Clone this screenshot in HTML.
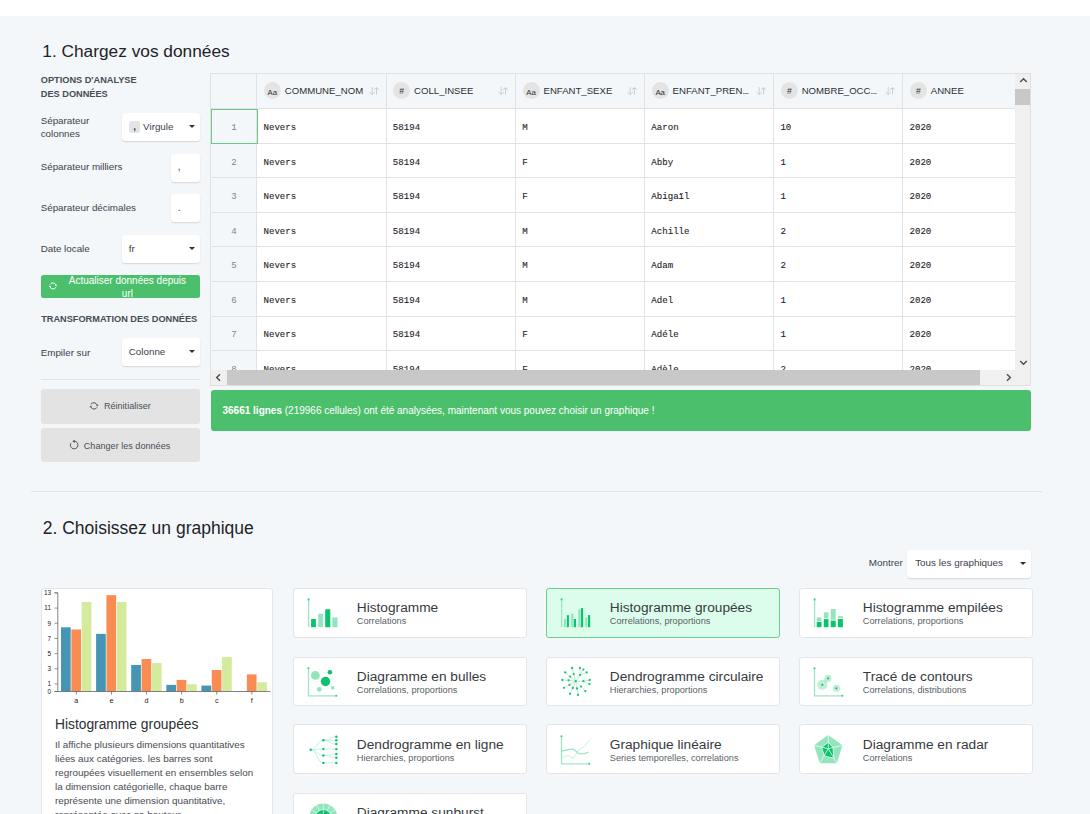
<!DOCTYPE html><html><head><meta charset="utf-8"><style>
*{box-sizing:border-box;margin:0;padding:0}
html,body{width:1090px;height:814px;overflow:hidden}
body{background:#f3f7fa;font-family:"Liberation Sans",sans-serif;color:#2b2f36;position:relative}
.abs{position:absolute}
.t{position:absolute;white-space:nowrap;line-height:1}
.topbar{left:0;top:0;width:1090px;height:16px;background:#fff}
.lbl{font-size:9.8px;color:#3d424a}
.cap{font-weight:bold;font-size:9.2px;color:#474c54}
.box{position:absolute;background:#fff;border-radius:3px;box-shadow:0 1px 1.5px rgba(0,0,0,.13)}
.caret{position:absolute;width:0;height:0;border-left:3px solid transparent;border-right:3px solid transparent;border-top:3.5px solid #2b2f36}
.btng{position:absolute;background:#e3e3e3;border-radius:3px}
.mono{font-family:"Liberation Mono",monospace;font-size:9.1px;color:#1e2127;-webkit-text-stroke:0.1px #1e2127}.num{-webkit-text-stroke:0;color:#80858c}
.hd{font-size:9.6px;color:#2b2f36}
.circ{position:absolute;width:17px;height:17px;border-radius:50%;background:#e4e4e4}
.card{position:absolute;background:#fff;border:1px solid #e3e5e8;border-radius:3px}
.ctitle{font-size:13.7px;color:#363a40}
.csub{font-size:9.2px;color:#5a5f66}
</style></head><body>
<div class="abs topbar"></div>
<div class="t" style="left:42.3px;top:43.0px;font-size:17.3px;color:#1f2329">1. Chargez vos données</div>
<div class="t cap" style="left:40.8px;top:76px">OPTIONS D'ANALYSE</div>
<div class="t cap" style="left:40.8px;top:90.2px">DES DONNÉES</div>
<div class="t lbl" style="left:40.7px;top:116.13px;font-size:9.8px">Séparateur</div>
<div class="t lbl" style="left:40.7px;top:129.33px;font-size:9.8px">colonnes</div>
<div class="t lbl" style="left:40.7px;top:162.33px;font-size:9.8px">Séparateur milliers</div>
<div class="t lbl" style="left:40.7px;top:203.13px;font-size:9.8px">Séparateur décimales</div>
<div class="t lbl" style="left:40.7px;top:243.63px;font-size:9.8px">Date locale</div>
<div class="t lbl" style="left:40.7px;top:348.13px;font-size:9.8px">Empiler sur</div>
<div class="box" style="left:122px;top:113px;width:78px;height:28px"></div>
<div class="abs" style="left:129.1px;top:120.9px;width:10.6px;height:11.8px;background:#e2e5e8;border-radius:2.5px"></div>
<div class="t" style="left:133.2px;top:122.2px;font-size:10px;font-weight:bold;color:#444">,</div>
<div class="t lbl" style="left:143.1px;top:121.73px;font-size:9.8px">Virgule</div>
<div class="caret" style="left:188.5px;top:125.2px"></div>
<div class="box" style="left:171px;top:154px;width:29px;height:27.5px"></div>
<div class="t" style="left:177.8px;top:162px;font-size:10px;color:#333">,</div>
<div class="box" style="left:171px;top:194px;width:29px;height:28px"></div>
<div class="t" style="left:177.8px;top:202.5px;font-size:10px;color:#333">.</div>
<div class="box" style="left:122px;top:235px;width:78px;height:28px"></div>
<div class="t lbl" style="left:128.7px;top:243.73px;font-size:9.8px">fr</div>
<div class="caret" style="left:188.5px;top:247.2px"></div>
<div class="box" style="left:122px;top:338px;width:78px;height:28px"></div>
<div class="t lbl" style="left:128.8px;top:346.73px;font-size:9.8px">Colonne</div>
<div class="caret" style="left:188.5px;top:350.2px"></div>
<div class="abs" style="left:40.7px;top:275px;width:159.3px;height:23px;background:#4bbf6b;border-radius:2.5px"></div>
<div class="t" style="left:62.4px;top:273.8px;width:130px;text-align:center;font-size:10px;color:#fff;line-height:13.3px;white-space:normal">Actualiser données depuis<br>url</div>
<svg class="abs" style="left:47.1px;top:280.4px" width="12" height="12" viewBox="0 0 12 12"><path d="M3.1 4.5A3.2 3.2 0 0 1 8.9 5M8.9 7.2A3.2 3.2 0 0 1 3.1 7" fill="none" stroke="#fff" stroke-width="1"/><path d="M7.8 4.8H10.2L9 6.4Z M1.8 7.1H4.2L3 5.5Z" fill="#fff"/></svg>
<div class="t cap" style="left:41.2px;top:315.3px">TRANSFORMATION DES DONNÉES</div>
<div class="abs" style="left:41px;top:378.5px;width:159px;height:1px;background:#dfe2e6"></div>
<div class="btng" style="left:40.7px;top:388.5px;width:159.3px;height:35.2px"></div>
<div class="t lbl" style="left:103.9px;top:401.9px;font-size:9.1px;color:#4a4f56">Réinitialiser</div>
<div class="btng" style="left:40.7px;top:428.3px;width:159.3px;height:34.1px"></div>
<div class="t lbl" style="left:83.8px;top:442.1px;font-size:9.1px;color:#4a4f56">Changer les données</div>
<svg class="abs" style="left:88px;top:399.7px" width="12" height="12" viewBox="0 0 12 12"><path d="M2.9 4.4A3.5 3.5 0 0 1 9.1 4.9M9.1 7.3A3.5 3.5 0 0 1 2.9 7.1" fill="none" stroke="#50555c" stroke-width="1"/><path d="M7.9 4.7H10.5L9.2 6.5Z M1.5 7.2H4.1L2.8 5.4Z" fill="#50555c"/></svg>
<svg class="abs" style="left:68px;top:439.45px" width="12" height="12" viewBox="0 0 12 12"><path d="M6.3 2.2A3.8 3.8 0 1 1 2.8 4.2" fill="none" stroke="#50555c" stroke-width="1"/><path d="M4.3 2.3L6.8 0.8V3.9Z" fill="#50555c"/></svg>
<div class="abs" style="left:210px;top:73px;width:821px;height:313px;background:#fff;border:1px solid #e0e0e0;overflow:hidden">
<div class="abs" style="left:0;top:0;width:2000px;height:35.0px;background:#f3f7fa"></div>
<div class="abs" style="left:0;top:0;width:45.89999999999998px;height:400px;background:#f3f7fa"></div>
<div class="abs" style="left:0;top:34px;width:2000px;height:1px;background:#e2e2e2"></div>
<div class="abs" style="left:0;top:69px;width:2000px;height:1px;background:#e2e2e2"></div>
<div class="abs" style="left:0;top:103px;width:2000px;height:1px;background:#e2e2e2"></div>
<div class="abs" style="left:0;top:138px;width:2000px;height:1px;background:#e2e2e2"></div>
<div class="abs" style="left:0;top:172px;width:2000px;height:1px;background:#e2e2e2"></div>
<div class="abs" style="left:0;top:207px;width:2000px;height:1px;background:#e2e2e2"></div>
<div class="abs" style="left:0;top:242px;width:2000px;height:1px;background:#e2e2e2"></div>
<div class="abs" style="left:0;top:276px;width:2000px;height:1px;background:#e2e2e2"></div>
<div class="abs" style="left:45.40px;top:0;width:1px;height:400px;background:#e2e2e2"></div>
<div class="abs" style="left:174.70px;top:0;width:1px;height:400px;background:#e2e2e2"></div>
<div class="abs" style="left:304.10px;top:0;width:1px;height:400px;background:#e2e2e2"></div>
<div class="abs" style="left:433.20px;top:0;width:1px;height:400px;background:#e2e2e2"></div>
<div class="abs" style="left:562.30px;top:0;width:1px;height:400px;background:#e2e2e2"></div>
<div class="abs" style="left:691.40px;top:0;width:1px;height:400px;background:#e2e2e2"></div>
<div class="circ" style="left:52.90px;top:8.00px"></div>
<div class="t" style="left:52.90px;top:14.50px;width:17px;text-align:center;font-size:7.8px;color:#333">Aa</div>
<div class="t hd" style="left:73.80px;top:11.50px">COMMUNE_NOM</div>
<svg class="abs" style="left:157.70px;top:11.00px" width="11" height="11" viewBox="0 0 11 11"><path d="M3.2 2.1v7.3M0.5 7L3.2 9.5L5.9 7M7.5 9.6V2.8M5.1 4.6L7.5 2.6L9.9 4.6" fill="none" stroke="#c3c6ca" stroke-width=".85"/></svg>
<div class="circ" style="left:182.20px;top:8.00px"></div>
<div class="t" style="left:182.20px;top:13.00px;width:17px;text-align:center;font-size:8.6px;color:#333">#</div>
<div class="t hd" style="left:203.10px;top:11.50px">COLL_INSEE</div>
<svg class="abs" style="left:287.10px;top:11.00px" width="11" height="11" viewBox="0 0 11 11"><path d="M3.2 2.1v7.3M0.5 7L3.2 9.5L5.9 7M7.5 9.6V2.8M5.1 4.6L7.5 2.6L9.9 4.6" fill="none" stroke="#c3c6ca" stroke-width=".85"/></svg>
<div class="circ" style="left:311.60px;top:8.00px"></div>
<div class="t" style="left:311.60px;top:14.50px;width:17px;text-align:center;font-size:7.8px;color:#333">Aa</div>
<div class="t hd" style="left:332.50px;top:11.50px">ENFANT_SEXE</div>
<svg class="abs" style="left:416.20px;top:11.00px" width="11" height="11" viewBox="0 0 11 11"><path d="M3.2 2.1v7.3M0.5 7L3.2 9.5L5.9 7M7.5 9.6V2.8M5.1 4.6L7.5 2.6L9.9 4.6" fill="none" stroke="#c3c6ca" stroke-width=".85"/></svg>
<div class="circ" style="left:440.70px;top:8.00px"></div>
<div class="t" style="left:440.70px;top:14.50px;width:17px;text-align:center;font-size:7.8px;color:#333">Aa</div>
<div class="t hd" style="left:461.60px;top:11.50px">ENFANT_PREN<span style="letter-spacing:-0.7px">...</span></div>
<svg class="abs" style="left:545.30px;top:11.00px" width="11" height="11" viewBox="0 0 11 11"><path d="M3.2 2.1v7.3M0.5 7L3.2 9.5L5.9 7M7.5 9.6V2.8M5.1 4.6L7.5 2.6L9.9 4.6" fill="none" stroke="#c3c6ca" stroke-width=".85"/></svg>
<div class="circ" style="left:569.80px;top:8.00px"></div>
<div class="t" style="left:569.80px;top:13.00px;width:17px;text-align:center;font-size:8.6px;color:#333">#</div>
<div class="t hd" style="left:590.70px;top:11.50px">NOMBRE_OCC<span style="letter-spacing:-0.7px">...</span></div>
<svg class="abs" style="left:674.40px;top:11.00px" width="11" height="11" viewBox="0 0 11 11"><path d="M3.2 2.1v7.3M0.5 7L3.2 9.5L5.9 7M7.5 9.6V2.8M5.1 4.6L7.5 2.6L9.9 4.6" fill="none" stroke="#c3c6ca" stroke-width=".85"/></svg>
<div class="circ" style="left:698.90px;top:8.00px"></div>
<div class="t" style="left:698.90px;top:13.00px;width:17px;text-align:center;font-size:8.6px;color:#333">#</div>
<div class="t hd" style="left:719.80px;top:11.50px">ANNEE</div>
<div class="t mono num" style="left:-0.10px;width:46px;text-align:center;top:48.98px">1</div>
<div class="t mono" style="left:52.50px;top:48.98px">Nevers</div>
<div class="t mono" style="left:181.80px;top:48.98px">58194</div>
<div class="t mono" style="left:311.20px;top:48.98px">M</div>
<div class="t mono" style="left:440.30px;top:48.98px">Aaron</div>
<div class="t mono" style="left:569.40px;top:48.98px">10</div>
<div class="t mono" style="left:698.50px;top:48.98px">2020</div>
<div class="t mono num" style="left:-0.10px;width:46px;text-align:center;top:83.54px">2</div>
<div class="t mono" style="left:52.50px;top:83.54px">Nevers</div>
<div class="t mono" style="left:181.80px;top:83.54px">58194</div>
<div class="t mono" style="left:311.20px;top:83.54px">F</div>
<div class="t mono" style="left:440.30px;top:83.54px">Abby</div>
<div class="t mono" style="left:569.40px;top:83.54px">1</div>
<div class="t mono" style="left:698.50px;top:83.54px">2020</div>
<div class="t mono num" style="left:-0.10px;width:46px;text-align:center;top:118.10px">3</div>
<div class="t mono" style="left:52.50px;top:118.10px">Nevers</div>
<div class="t mono" style="left:181.80px;top:118.10px">58194</div>
<div class="t mono" style="left:311.20px;top:118.10px">F</div>
<div class="t mono" style="left:440.30px;top:118.10px">Abigaïl</div>
<div class="t mono" style="left:569.40px;top:118.10px">1</div>
<div class="t mono" style="left:698.50px;top:118.10px">2020</div>
<div class="t mono num" style="left:-0.10px;width:46px;text-align:center;top:152.66px">4</div>
<div class="t mono" style="left:52.50px;top:152.66px">Nevers</div>
<div class="t mono" style="left:181.80px;top:152.66px">58194</div>
<div class="t mono" style="left:311.20px;top:152.66px">M</div>
<div class="t mono" style="left:440.30px;top:152.66px">Achille</div>
<div class="t mono" style="left:569.40px;top:152.66px">2</div>
<div class="t mono" style="left:698.50px;top:152.66px">2020</div>
<div class="t mono num" style="left:-0.10px;width:46px;text-align:center;top:187.22px">5</div>
<div class="t mono" style="left:52.50px;top:187.22px">Nevers</div>
<div class="t mono" style="left:181.80px;top:187.22px">58194</div>
<div class="t mono" style="left:311.20px;top:187.22px">M</div>
<div class="t mono" style="left:440.30px;top:187.22px">Adam</div>
<div class="t mono" style="left:569.40px;top:187.22px">2</div>
<div class="t mono" style="left:698.50px;top:187.22px">2020</div>
<div class="t mono num" style="left:-0.10px;width:46px;text-align:center;top:221.78px">6</div>
<div class="t mono" style="left:52.50px;top:221.78px">Nevers</div>
<div class="t mono" style="left:181.80px;top:221.78px">58194</div>
<div class="t mono" style="left:311.20px;top:221.78px">M</div>
<div class="t mono" style="left:440.30px;top:221.78px">Adel</div>
<div class="t mono" style="left:569.40px;top:221.78px">1</div>
<div class="t mono" style="left:698.50px;top:221.78px">2020</div>
<div class="t mono num" style="left:-0.10px;width:46px;text-align:center;top:256.34px">7</div>
<div class="t mono" style="left:52.50px;top:256.34px">Nevers</div>
<div class="t mono" style="left:181.80px;top:256.34px">58194</div>
<div class="t mono" style="left:311.20px;top:256.34px">F</div>
<div class="t mono" style="left:440.30px;top:256.34px">Adéle</div>
<div class="t mono" style="left:569.40px;top:256.34px">1</div>
<div class="t mono" style="left:698.50px;top:256.34px">2020</div>
<div class="t mono num" style="left:-0.10px;width:46px;text-align:center;top:290.90px">8</div>
<div class="t mono" style="left:52.50px;top:290.90px">Nevers</div>
<div class="t mono" style="left:181.80px;top:290.90px">58194</div>
<div class="t mono" style="left:311.20px;top:290.90px">F</div>
<div class="t mono" style="left:440.30px;top:290.90px">Adèle</div>
<div class="t mono" style="left:569.40px;top:290.90px">2</div>
<div class="t mono" style="left:698.50px;top:290.90px">2020</div>
<div class="abs" style="left:0;top:35.30px;width:46.6px;height:34.4px;border:1.25px solid #6acb83"></div>
<div class="abs" style="left:804.00px;top:0;width:16px;height:400px;background:#f0f0f0"></div>
<div class="abs" style="left:804.00px;top:15.30px;width:15px;height:15.3px;background:#c8c8c8"></div>
<svg class="abs" style="left:807.50px;top:2.00px" width="9" height="9" viewBox="0 0 9 9"><path d="M1.2 6L4.5 2.7L7.8 6" fill="none" stroke="#505050" stroke-width="1.5"/></svg>
<svg class="abs" style="left:807.50px;top:283.50px" width="9" height="9" viewBox="0 0 9 9"><path d="M1.2 3L4.5 6.3L7.8 3" fill="none" stroke="#505050" stroke-width="1.5"/></svg>
<div class="abs" style="left:0;top:295.70px;width:804.00px;height:16px;background:#f0f0f0"></div>
<div class="abs" style="left:16.00px;top:295.70px;width:753.00px;height:15.5px;background:#c8c8c8"></div>
<svg class="abs" style="left:3.00px;top:299.00px" width="9" height="9" viewBox="0 0 9 9"><path d="M6 1.2L2.7 4.5L6 7.8" fill="none" stroke="#505050" stroke-width="1.5"/></svg>
<svg class="abs" style="left:792.50px;top:299.00px" width="9" height="9" viewBox="0 0 9 9"><path d="M3 1.2L6.3 4.5L3 7.8" fill="none" stroke="#505050" stroke-width="1.5"/></svg>
</div>
<div class="abs" style="left:210.8px;top:390.2px;width:820.2px;height:40.7px;background:#4bbf6b;border-radius:3px"></div>
<div class="t" style="left:222.5px;top:406.2px;font-size:10px;color:#fff"><b>36661 lignes</b> (219966 cellules) ont été analysées, maintenant vous pouvez choisir un graphique !</div>
<div class="abs" style="left:30.7px;top:491px;width:1011.5px;height:1px;background:#dfe2e6"></div>
<div class="t" style="left:42.7px;top:519.6px;font-size:17.5px;color:#1f2329">2. Choisissez un graphique</div>
<div class="t lbl" style="left:868.7px;top:558.24px;font-size:9.9px">Montrer</div>
<div class="box" style="left:907.4px;top:550px;width:124px;height:28.2px"></div>
<div class="t lbl" style="left:915.2px;top:558.24px;font-size:9.9px">Tous les graphiques</div>
<div class="caret" style="left:1020px;top:562.3px"></div>
<div class="abs" style="left:41px;top:588px;width:232px;height:300px;background:#fff;border:1px solid #e3e5e8;border-radius:3px"></div>
<div class="t" style="left:55px;top:718px;font-size:13.8px;color:#2b2f36">Histogramme groupées</div>
<div class="t lbl" style="left:55px;top:740.04px;font-size:9.9px;color:#474c53">Il affiche plusieurs dimensions quantitatives</div>
<div class="t lbl" style="left:55px;top:754.04px;font-size:9.9px;color:#474c53">liées aux catégories. les barres sont</div>
<div class="t lbl" style="left:55px;top:768.04px;font-size:9.9px;color:#474c53">regroupées visuellement en ensembles selon</div>
<div class="t lbl" style="left:55px;top:782.04px;font-size:9.9px;color:#474c53">la dimension catégorielle, chaque barre</div>
<div class="t lbl" style="left:55px;top:796.04px;font-size:9.9px;color:#474c53">représente une dimension quantitative,</div>
<div class="t lbl" style="left:55px;top:810.04px;font-size:9.9px;color:#474c53">représentée avec sa hauteur.</div>
<svg class="abs" style="left:0;top:0" width="1090" height="814"><rect x="61.00" y="627.33" width="9.7" height="64.17" fill="#4595b5"/><rect x="71.35" y="629.46" width="9.7" height="62.04" fill="#f98c52"/><rect x="81.70" y="602.00" width="9.7" height="89.50" fill="#d4eb9d"/><line x1="76.35" y1="691.5" x2="76.35" y2="694.5" stroke="#555" stroke-width="0.7"/><text x="76.35" y="702.5" font-size="7.2" text-anchor="middle" fill="#222" font-family="Liberation Sans">a</text><rect x="96.10" y="633.86" width="9.7" height="57.64" fill="#4595b5"/><rect x="106.45" y="595.18" width="9.7" height="96.32" fill="#f98c52"/><rect x="116.80" y="602.00" width="9.7" height="89.50" fill="#d4eb9d"/><line x1="111.45" y1="691.5" x2="111.45" y2="694.5" stroke="#555" stroke-width="0.7"/><text x="111.45" y="702.5" font-size="7.2" text-anchor="middle" fill="#222" font-family="Liberation Sans">e</text><rect x="131.20" y="664.95" width="9.7" height="26.55" fill="#4595b5"/><rect x="141.55" y="659.04" width="9.7" height="32.46" fill="#f98c52"/><rect x="151.90" y="663.06" width="9.7" height="28.44" fill="#d4eb9d"/><line x1="146.55" y1="691.5" x2="146.55" y2="694.5" stroke="#555" stroke-width="0.7"/><text x="146.55" y="702.5" font-size="7.2" text-anchor="middle" fill="#222" font-family="Liberation Sans">d</text><rect x="166.30" y="684.90" width="9.7" height="6.60" fill="#4595b5"/><rect x="176.65" y="679.90" width="9.7" height="11.60" fill="#f98c52"/><rect x="187.00" y="684.29" width="9.7" height="7.21" fill="#d4eb9d"/><line x1="181.65" y1="691.5" x2="181.65" y2="694.5" stroke="#555" stroke-width="0.7"/><text x="181.65" y="702.5" font-size="7.2" text-anchor="middle" fill="#222" font-family="Liberation Sans">b</text><rect x="201.40" y="685.58" width="9.7" height="5.92" fill="#4595b5"/><rect x="211.75" y="670.04" width="9.7" height="21.46" fill="#f98c52"/><rect x="222.10" y="657.07" width="9.7" height="34.43" fill="#d4eb9d"/><line x1="216.75" y1="691.5" x2="216.75" y2="694.5" stroke="#555" stroke-width="0.7"/><text x="216.75" y="702.5" font-size="7.2" text-anchor="middle" fill="#222" font-family="Liberation Sans">c</text><rect x="236.50" y="691.12" width="9.7" height="0.38" fill="#4595b5"/><rect x="246.85" y="674.36" width="9.7" height="17.14" fill="#f98c52"/><rect x="257.20" y="682.25" width="9.7" height="9.25" fill="#d4eb9d"/><line x1="251.85" y1="691.5" x2="251.85" y2="694.5" stroke="#555" stroke-width="0.7"/><text x="251.85" y="702.5" font-size="7.2" text-anchor="middle" fill="#222" font-family="Liberation Sans">f</text><path d="M54.5 592.9H57.8V691.5H54.5M57.8 691.5H270.5" fill="none" stroke="#666" stroke-width="0.8"/><line x1="54.5" y1="691.50" x2="57.8" y2="691.50" stroke="#666" stroke-width="0.7"/><text x="51" y="693.80" font-size="6.4" text-anchor="end" fill="#222" font-family="Liberation Sans">0</text><line x1="54.5" y1="683.92" x2="57.8" y2="683.92" stroke="#666" stroke-width="0.7"/><text x="51" y="686.22" font-size="6.4" text-anchor="end" fill="#222" font-family="Liberation Sans">1</text><line x1="54.5" y1="668.75" x2="57.8" y2="668.75" stroke="#666" stroke-width="0.7"/><text x="51" y="671.05" font-size="6.4" text-anchor="end" fill="#222" font-family="Liberation Sans">3</text><line x1="54.5" y1="653.58" x2="57.8" y2="653.58" stroke="#666" stroke-width="0.7"/><text x="51" y="655.88" font-size="6.4" text-anchor="end" fill="#222" font-family="Liberation Sans">5</text><line x1="54.5" y1="638.41" x2="57.8" y2="638.41" stroke="#666" stroke-width="0.7"/><text x="51" y="640.71" font-size="6.4" text-anchor="end" fill="#222" font-family="Liberation Sans">7</text><line x1="54.5" y1="623.24" x2="57.8" y2="623.24" stroke="#666" stroke-width="0.7"/><text x="51" y="625.54" font-size="6.4" text-anchor="end" fill="#222" font-family="Liberation Sans">9</text><line x1="54.5" y1="608.07" x2="57.8" y2="608.07" stroke="#666" stroke-width="0.7"/><text x="51" y="610.37" font-size="6.4" text-anchor="end" fill="#222" font-family="Liberation Sans">11</text><line x1="54.5" y1="592.90" x2="57.8" y2="592.90" stroke="#666" stroke-width="0.7"/><text x="51" y="595.20" font-size="6.4" text-anchor="end" fill="#222" font-family="Liberation Sans">13</text></svg>
<div class="card" style="left:293px;top:588px;width:234px;height:50px;"></div>
<div class="t ctitle" style="left:356.80px;top:600.90px">Histogramme</div>
<div class="t csub" style="left:356.80px;top:617.30px">Correlations</div>
<svg class="abs" style="left:308.10px;top:598.90px;overflow:visible" width="30" height="30" viewBox="0 0 30 30"><line x1="0.6" y1="0.4" x2="0.6" y2="28.2" stroke="#9fe7c2" stroke-width="1.35"/><circle cx="0.6" cy="0.4" r="1.05" fill="#3acf87"/><rect x="3.1" y="20" width="4.80" height="8.20" fill="#08c46c"/><rect x="10.2" y="14.7" width="4.70" height="13.50" fill="#94e5bd"/><rect x="17.2" y="10.3" width="5.10" height="17.90" fill="#08c46c"/><rect x="24.3" y="18.4" width="5.20" height="9.80" fill="#94e5bd"/></svg>
<div class="card" style="left:546px;top:588px;width:234px;height:50px;background:#dcfdec;border-color:#6acf88"></div>
<div class="t ctitle" style="left:609.80px;top:600.90px">Histogramme groupées</div>
<div class="t csub" style="left:609.80px;top:617.30px">Correlations, proportions</div>
<svg class="abs" style="left:561.10px;top:598.90px;overflow:visible" width="30" height="30" viewBox="0 0 30 30"><line x1="0.6" y1="0.4" x2="0.6" y2="28.2" stroke="#9fe7c2" stroke-width="1.35"/><circle cx="0.6" cy="0.4" r="1.05" fill="#3acf87"/><rect x="2.95" y="20" width="2.25" height="8.20" fill="#94e5bd"/><rect x="5.9" y="16.1" width="2.00" height="12.10" fill="#08c46c"/><rect x="10.1" y="14.7" width="2.30" height="13.50" fill="#94e5bd"/><rect x="12.8" y="20" width="2.20" height="8.20" fill="#08c46c"/><rect x="17.2" y="10.3" width="2.30" height="17.90" fill="#94e5bd"/><rect x="19.9" y="9.1" width="2.20" height="19.10" fill="#08c46c"/><rect x="24.2" y="18.4" width="2.20" height="9.80" fill="#94e5bd"/><rect x="27" y="16.1" width="2.20" height="12.10" fill="#08c46c"/></svg>
<div class="card" style="left:799px;top:588px;width:234px;height:50px;"></div>
<div class="t ctitle" style="left:862.80px;top:600.90px">Histogramme empilées</div>
<div class="t csub" style="left:862.80px;top:617.30px">Correlations, proportions</div>
<svg class="abs" style="left:814.10px;top:598.90px;overflow:visible" width="30" height="30" viewBox="0 0 30 30"><line x1="0.6" y1="0.4" x2="0.6" y2="28.2" stroke="#9fe7c2" stroke-width="1.35"/><circle cx="0.6" cy="0.4" r="1.05" fill="#3acf87"/><rect x="2.75" y="18.4" width="4.75" height="3.60" fill="#94e5bd"/><rect x="2.75" y="22.8" width="4.75" height="5.40" fill="#08c46c"/><rect x="9.8" y="13.3" width="4.70" height="6.00" fill="#94e5bd"/><rect x="9.8" y="20.1" width="4.70" height="8.10" fill="#08c46c"/><rect x="16.75" y="10" width="4.95" height="10.80" fill="#94e5bd"/><rect x="16.75" y="21.6" width="4.95" height="6.60" fill="#08c46c"/><rect x="23.9" y="17.2" width="5.00" height="2.00" fill="#94e5bd"/><rect x="23.9" y="20" width="5.00" height="8.20" fill="#08c46c"/></svg>
<div class="card" style="left:293px;top:657px;width:234px;height:49px;"></div>
<div class="t ctitle" style="left:356.80px;top:669.90px">Diagramme en bulles</div>
<div class="t csub" style="left:356.80px;top:686.30px">Correlations, proportions</div>
<svg class="abs" style="left:308.10px;top:667.90px;overflow:visible" width="30" height="30" viewBox="0 0 30 30"><path d="M0.5 0.3V27.8H28.3" fill="none" stroke="#9fe7c2" stroke-width="1.3"/><circle cx="0.5" cy="0.3" r="1.05" fill="#3acf87"/><circle cx="28.3" cy="27.8" r="1.05" fill="#3acf87"/><circle cx="7.4" cy="7.4" r="4.4" fill="#94e5bd"/><circle cx="21.9" cy="4.3" r="2.3" fill="#08c46c"/><circle cx="17.5" cy="13.5" r="4.7" fill="#08c46c"/><circle cx="11.3" cy="21.3" r="2.4" fill="#94e5bd"/><circle cx="24.7" cy="19.85" r="1.8" fill="#94e5bd"/></svg>
<div class="card" style="left:546px;top:657px;width:234px;height:49px;"></div>
<div class="t ctitle" style="left:609.80px;top:669.90px">Dendrogramme circulaire</div>
<div class="t csub" style="left:609.80px;top:686.30px">Hierarchies, proportions</div>
<svg class="abs" style="left:561.10px;top:667.90px;overflow:visible" width="30" height="30" viewBox="0 0 30 30"><line x1="14.74" y1="13.22" x2="12.77" y2="6.1" stroke="#a9e8c7" stroke-width="0.8"/><line x1="14.74" y1="13.22" x2="19.0" y2="7.08" stroke="#a9e8c7" stroke-width="0.8"/><line x1="14.74" y1="13.22" x2="9.2" y2="8.55" stroke="#a9e8c7" stroke-width="0.8"/><line x1="14.74" y1="13.22" x2="7.62" y2="12.34" stroke="#a9e8c7" stroke-width="0.8"/><line x1="14.74" y1="13.22" x2="8.5" y2="16.8" stroke="#a9e8c7" stroke-width="0.8"/><line x1="14.74" y1="13.22" x2="11.8" y2="20" stroke="#a9e8c7" stroke-width="0.8"/><line x1="14.74" y1="13.22" x2="16" y2="20.5" stroke="#a9e8c7" stroke-width="0.8"/><line x1="14.74" y1="13.22" x2="20.1" y2="18.6" stroke="#a9e8c7" stroke-width="0.8"/><line x1="14.74" y1="13.22" x2="22.35" y2="13.2" stroke="#a9e8c7" stroke-width="0.8"/><line x1="12.77" y1="6.1" x2="11.05" y2="0" stroke="#a9e8c7" stroke-width="0.8"/><line x1="19.0" y1="7.08" x2="18.9" y2="0" stroke="#a9e8c7" stroke-width="0.8"/><line x1="19.0" y1="7.08" x2="22.45" y2="1.53" stroke="#a9e8c7" stroke-width="0.8"/><line x1="19.0" y1="7.08" x2="25.7" y2="4.4" stroke="#a9e8c7" stroke-width="0.8"/><line x1="9.2" y1="8.55" x2="4.2" y2="4.4" stroke="#a9e8c7" stroke-width="0.8"/><line x1="7.62" y1="12.34" x2="1.33" y2="12" stroke="#a9e8c7" stroke-width="0.8"/><line x1="22.35" y1="13.2" x2="28.7" y2="12" stroke="#a9e8c7" stroke-width="0.8"/><line x1="22.35" y1="13.2" x2="28.5" y2="16.1" stroke="#a9e8c7" stroke-width="0.8"/><line x1="8.5" y1="16.8" x2="2.95" y2="19.85" stroke="#a9e8c7" stroke-width="0.8"/><line x1="20.1" y1="18.6" x2="24.3" y2="23.1" stroke="#a9e8c7" stroke-width="0.8"/><line x1="11.8" y1="20" x2="9.0" y2="25.75" stroke="#a9e8c7" stroke-width="0.8"/><line x1="16" y1="20.5" x2="17.05" y2="26.9" stroke="#a9e8c7" stroke-width="0.8"/><circle cx="14.74" cy="13.22" r="1.15" fill="#14c874"/><circle cx="12.77" cy="6.1" r="1.15" fill="#14c874"/><circle cx="19.0" cy="7.08" r="1.15" fill="#14c874"/><circle cx="9.2" cy="8.55" r="1.15" fill="#14c874"/><circle cx="7.62" cy="12.34" r="1.15" fill="#14c874"/><circle cx="8.5" cy="16.8" r="1.15" fill="#14c874"/><circle cx="11.8" cy="20" r="1.15" fill="#14c874"/><circle cx="16" cy="20.5" r="1.15" fill="#14c874"/><circle cx="20.1" cy="18.6" r="1.15" fill="#14c874"/><circle cx="22.35" cy="13.2" r="1.15" fill="#14c874"/><circle cx="11.05" cy="0" r="1.15" fill="#14c874"/><circle cx="18.9" cy="0" r="1.15" fill="#14c874"/><circle cx="22.45" cy="1.53" r="1.15" fill="#14c874"/><circle cx="25.7" cy="4.4" r="1.15" fill="#14c874"/><circle cx="4.2" cy="4.4" r="1.15" fill="#14c874"/><circle cx="1.33" cy="12" r="1.15" fill="#14c874"/><circle cx="28.7" cy="12" r="1.15" fill="#14c874"/><circle cx="28.5" cy="16.1" r="1.15" fill="#14c874"/><circle cx="2.95" cy="19.85" r="1.15" fill="#14c874"/><circle cx="24.3" cy="23.1" r="1.15" fill="#14c874"/><circle cx="9.0" cy="25.75" r="1.15" fill="#14c874"/><circle cx="17.05" cy="26.9" r="1.15" fill="#14c874"/></svg>
<div class="card" style="left:799px;top:657px;width:234px;height:49px;"></div>
<div class="t ctitle" style="left:862.80px;top:669.90px">Tracé de contours</div>
<div class="t csub" style="left:862.80px;top:686.30px">Correlations, distributions</div>
<svg class="abs" style="left:814.10px;top:667.90px;overflow:visible" width="30" height="30" viewBox="0 0 30 30"><path d="M0.5 0.3V27.8H28.3" fill="none" stroke="#9fe7c2" stroke-width="1.3"/><circle cx="0.5" cy="0.3" r="1.05" fill="#3acf87"/><circle cx="28.3" cy="27.8" r="1.05" fill="#3acf87"/><line x1="8.3" y1="16.76" x2="14.05" y2="10.37" stroke="#aee9ca" stroke-width="4.2"/><circle cx="8.3" cy="16.76" r="5.1" fill="#aee9ca"/><circle cx="8.3" cy="16.76" r="4.05" fill="none" stroke="#e9f9f1" stroke-width="0.6"/><circle cx="8.3" cy="16.76" r="2.45" fill="none" stroke="#e9f9f1" stroke-width="0.6"/><circle cx="8.3" cy="16.76" r="1.0" fill="#08c46c"/><circle cx="14.05" cy="10.37" r="3.5" fill="#aee9ca"/><circle cx="14.05" cy="10.37" r="2.5500000000000003" fill="none" stroke="#e9f9f1" stroke-width="0.6"/><circle cx="14.05" cy="10.37" r="1.0" fill="#08c46c"/><circle cx="22.4" cy="20.34" r="3.5" fill="#aee9ca"/><circle cx="22.4" cy="20.34" r="2.5500000000000003" fill="none" stroke="#e9f9f1" stroke-width="0.6"/><circle cx="22.4" cy="20.34" r="1.0" fill="#08c46c"/></svg>
<div class="card" style="left:293px;top:724px;width:234px;height:50px;"></div>
<div class="t ctitle" style="left:356.80px;top:738.00px">Dendrogramme en ligne</div>
<div class="t csub" style="left:356.80px;top:754.40px">Hierarchies, proportions</div>
<svg class="abs" style="left:308.10px;top:736.00px;overflow:visible" width="30" height="30" viewBox="0 0 30 30"><path d="M2.7 13.7C9.040000000000001 13.7 9.040000000000001 4.28 15.38 4.28" fill="none" stroke="#b9edd2" stroke-width="0.8"/><path d="M15.38 4.28C21.865000000000002 4.28 21.865000000000002 0.7 28.35 0.7" fill="none" stroke="#b9edd2" stroke-width="0.8"/><circle cx="28.35" cy="0.7" r="1.2" fill="#08c46c"/><path d="M15.38 4.28C21.865000000000002 4.28 21.865000000000002 4.28 28.35 4.28" fill="none" stroke="#b9edd2" stroke-width="0.8"/><circle cx="28.35" cy="4.28" r="1.2" fill="#08c46c"/><path d="M15.38 4.28C21.865000000000002 4.28 21.865000000000002 8.06 28.35 8.06" fill="none" stroke="#b9edd2" stroke-width="0.8"/><circle cx="28.35" cy="8.06" r="1.2" fill="#08c46c"/><circle cx="15.38" cy="4.28" r="1.2" fill="#08c46c"/><path d="M2.7 13.7C9.040000000000001 13.7 9.040000000000001 13.1 15.38 13.1" fill="none" stroke="#b9edd2" stroke-width="0.8"/><path d="M15.38 13.1C21.865000000000002 13.1 21.865000000000002 13.1 28.35 13.1" fill="none" stroke="#b9edd2" stroke-width="0.8"/><circle cx="28.35" cy="13.1" r="1.2" fill="#08c46c"/><circle cx="15.38" cy="13.1" r="1.2" fill="#08c46c"/><path d="M2.7 13.7C9.040000000000001 13.7 9.040000000000001 19.5 15.38 19.5" fill="none" stroke="#b9edd2" stroke-width="0.8"/><path d="M15.38 19.5C21.865000000000002 19.5 21.865000000000002 18.0 28.35 18.0" fill="none" stroke="#b9edd2" stroke-width="0.8"/><circle cx="28.35" cy="18.0" r="1.2" fill="#08c46c"/><path d="M15.38 19.5C21.865000000000002 19.5 21.865000000000002 21.8 28.35 21.8" fill="none" stroke="#b9edd2" stroke-width="0.8"/><circle cx="28.35" cy="21.8" r="1.2" fill="#08c46c"/><circle cx="15.38" cy="19.5" r="1.2" fill="#08c46c"/><path d="M2.7 13.7C9.040000000000001 13.7 9.040000000000001 26.9 15.38 26.9" fill="none" stroke="#b9edd2" stroke-width="0.8"/><path d="M15.38 26.9C21.865000000000002 26.9 21.865000000000002 26.9 28.35 26.9" fill="none" stroke="#b9edd2" stroke-width="0.8"/><circle cx="28.35" cy="26.9" r="1.2" fill="#08c46c"/><circle cx="15.38" cy="26.9" r="1.2" fill="#08c46c"/><circle cx="2.7" cy="13.7" r="1.2" fill="#08c46c"/></svg>
<div class="card" style="left:546px;top:724px;width:234px;height:50px;"></div>
<div class="t ctitle" style="left:609.80px;top:738.00px">Graphique linéaire</div>
<div class="t csub" style="left:609.80px;top:754.40px">Series temporelles, correlations</div>
<svg class="abs" style="left:561.10px;top:736.00px;overflow:visible" width="30" height="30" viewBox="0 0 30 30"><path d="M0.5 0.3V27.8H28.3" fill="none" stroke="#9fe7c2" stroke-width="1.3"/><circle cx="0.5" cy="0.3" r="1.05" fill="#3acf87"/><circle cx="28.3" cy="27.8" r="1.05" fill="#3acf87"/><polyline points="0.74,22.1 6.9,19.4 12.3,22.3 17.9,13.7 23.6,10.3 28.2,4.4" fill="none" stroke="#b9edd2" stroke-width="0.8"/><polyline points="0.74,15.2 7.6,13.5 12.5,13.2 17.9,17.6 23.3,17.6 27.5,16.2" fill="none" stroke="#9fe7c2" stroke-width="1.3"/></svg>
<div class="card" style="left:799px;top:724px;width:234px;height:50px;"></div>
<div class="t ctitle" style="left:862.80px;top:738.00px">Diagramme en radar</div>
<div class="t csub" style="left:862.80px;top:754.40px">Correlations</div>
<svg class="abs" style="left:814.10px;top:736.00px;overflow:visible" width="30" height="30" viewBox="0 0 30 30"><polygon points="14.3,-1.0 28.5,9.3 22.9,27.2 5.7,27.2 0.05,9.3" fill="#94e5bd"/><polygon points="14.3,6.2 19.0,11.5 19.8,22.3 10.4,19.8 7.6,11.6" fill="#08c46c" stroke="#f0fbf5" stroke-width="0.8"/><line x1="14.3" y1="12.7" x2="14.3" y2="-1.0" stroke="#f0fbf5" stroke-width="0.8"/><line x1="14.3" y1="12.7" x2="28.5" y2="9.3" stroke="#f0fbf5" stroke-width="0.8"/><line x1="14.3" y1="12.7" x2="22.9" y2="27.2" stroke="#f0fbf5" stroke-width="0.8"/><line x1="14.3" y1="12.7" x2="5.7" y2="27.2" stroke="#f0fbf5" stroke-width="0.8"/><line x1="14.3" y1="12.7" x2="0.05" y2="9.3" stroke="#f0fbf5" stroke-width="0.8"/></svg>
<div class="card" style="left:293px;top:793px;width:234px;height:50px;"></div>
<div class="t ctitle" style="left:356.80px;top:805.90px">Diagramme sunburst</div>
<div class="t csub" style="left:356.80px;top:822.30px">Hierarchies, proportions</div>
<svg class="abs" style="left:308.10px;top:803.90px;overflow:visible" width="30" height="30" viewBox="0 0 30 30"><circle cx="15.3" cy="13.5" r="14" fill="#94e5bd"/><line x1="16.55" y1="21.40" x2="17.57" y2="27.82" stroke="#e6f8ef" stroke-width="0.7"/><line x1="20.17" y1="19.85" x2="24.13" y2="25.00" stroke="#e6f8ef" stroke-width="0.7"/><line x1="22.61" y1="16.75" x2="28.55" y2="19.40" stroke="#e6f8ef" stroke-width="0.7"/><line x1="23.28" y1="12.87" x2="29.76" y2="12.36" stroke="#e6f8ef" stroke-width="0.7"/><line x1="22.01" y1="9.14" x2="27.46" y2="5.60" stroke="#e6f8ef" stroke-width="0.7"/><line x1="19.12" y1="6.47" x2="22.22" y2="0.76" stroke="#e6f8ef" stroke-width="0.7"/><line x1="15.30" y1="5.50" x2="15.30" y2="-1.00" stroke="#e6f8ef" stroke-width="0.7"/><line x1="11.48" y1="6.47" x2="8.38" y2="0.76" stroke="#e6f8ef" stroke-width="0.7"/><line x1="8.59" y1="9.14" x2="3.14" y2="5.60" stroke="#e6f8ef" stroke-width="0.7"/><line x1="7.32" y1="12.87" x2="0.84" y2="12.36" stroke="#e6f8ef" stroke-width="0.7"/><line x1="7.99" y1="16.75" x2="2.05" y2="19.40" stroke="#e6f8ef" stroke-width="0.7"/><line x1="10.43" y1="19.85" x2="6.47" y2="25.00" stroke="#e6f8ef" stroke-width="0.7"/><line x1="14.05" y1="21.40" x2="13.03" y2="27.82" stroke="#e6f8ef" stroke-width="0.7"/><circle cx="15.3" cy="13.5" r="8.2" fill="#e6f8ef"/><circle cx="15.3" cy="13.5" r="7.6" fill="#08c46c"/><line x1="15.3" y1="5" x2="15.3" y2="22" stroke="#e6f8ef" stroke-width="0.7"/></svg>
</body></html>
